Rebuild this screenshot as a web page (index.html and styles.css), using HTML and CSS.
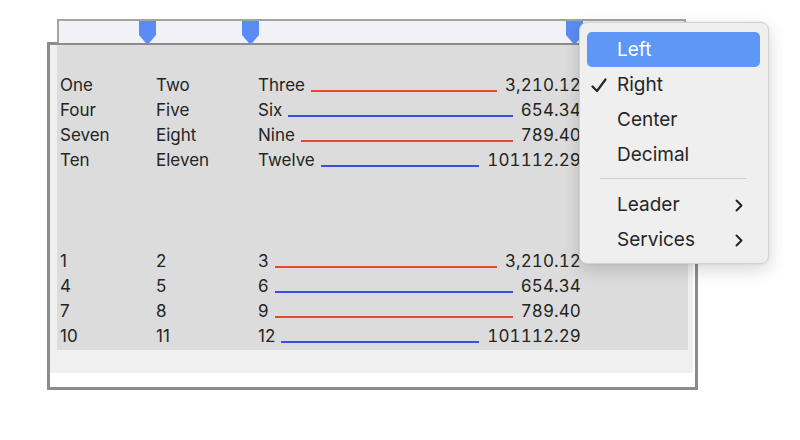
FILE: index.html
```html
<!DOCTYPE html>
<html lang="en">
<head>
  <meta charset="UTF-8" />
  <title>Tab Stops</title>
  <link rel="stylesheet" href="styles.css">
</head>
<body>
  <div class="window">
    <div class="ruler">
      <span class="marker" style="left: 80px"></span>
      <span class="marker" style="left: 183px"></span>
      <span class="marker" style="left: 507px"></span>
    </div>

    <div class="frame">
      <div class="scroll">
        <div class="doc">
          <div class="row"><span>One</span><span>Two</span><span class="tab"><span>Three</span><i class="leader red"></i><span class="num">3,210.12</span></span></div>
          <div class="row"><span>Four</span><span>Five</span><span class="tab"><span>Six</span><i class="leader blue"></i><span class="num">654.34</span></span></div>
          <div class="row"><span>Seven</span><span>Eight</span><span class="tab"><span>Nine</span><i class="leader red"></i><span class="num">789.40</span></span></div>
          <div class="row"><span>Ten</span><span>Eleven</span><span class="tab"><span>Twelve</span><i class="leader blue"></i><span class="num">101112.29</span></span></div>

          <div class="blank"></div>

          <div class="row"><span>1</span><span>2</span><span class="tab"><span>3</span><i class="leader red"></i><span class="num">3,210.12</span></span></div>
          <div class="row"><span>4</span><span>5</span><span class="tab"><span>6</span><i class="leader blue"></i><span class="num">654.34</span></span></div>
          <div class="row"><span>7</span><span>8</span><span class="tab"><span>9</span><i class="leader red"></i><span class="num">789.40</span></span></div>
          <div class="row"><span>10</span><span>11</span><span class="tab"><span>12</span><i class="leader blue"></i><span class="num">101112.29</span></span></div>
        </div>
      </div>
    </div>
  </div>

  <div class="menu">
    <div class="item active">Left</div>
    <div class="item">
      <svg class="check" width="16" height="15" viewBox="0 0 16 15"><path d="M1.5 8.5 L6 13 L14.5 1.5" fill="none" stroke="#262626" stroke-width="2.2" stroke-linecap="round" stroke-linejoin="round"/></svg>
      Right
    </div>
    <div class="item">Center</div>
    <div class="item">Decimal</div>
    <div class="sep"></div>
    <div class="item">Leader
      <svg class="chev" width="8" height="13" viewBox="0 0 8 13"><path d="M1.5 1.5 L6.5 6.5 L1.5 11.5" fill="none" stroke="#262626" stroke-width="2" stroke-linecap="round" stroke-linejoin="round"/></svg>
    </div>
    <div class="item">Services
      <svg class="chev" width="8" height="13" viewBox="0 0 8 13"><path d="M1.5 1.5 L6.5 6.5 L1.5 11.5" fill="none" stroke="#262626" stroke-width="2" stroke-linecap="round" stroke-linejoin="round"/></svg>
    </div>
  </div>
</body>
</html>
```

FILE: styles.css
```css
body {
  margin: 0;
  background: #fff;
  font-family: Inter, "Noto Sans", sans-serif;
  color: #242424;
}

.window {
  padding: 19px 0 0 47px;
}

.ruler {
  position: relative;
  box-sizing: border-box;
  width: 629px;
  height: 24px;
  margin-left: 10px;
  background: #f1f2f8;
  border: 2px solid #a3a3a3;
  border-bottom: none;
}

.marker {
  position: absolute;
  top: 0;
  width: 17px;
  height: 24px;
  background: #5b8cf5;
  clip-path: polygon(0 0, 100% 0, 100% 58%, 50% 100%, 0 58%);
  z-index: 2;
}

.frame {
  box-sizing: border-box;
  width: 651px;
  height: 348px;
  margin-top: -1px;
  border: 3px solid #8c8c8c;
  background: #fff;
}

.scroll {
  height: 328px;
  margin-right: 2px;
  background: #f0f0f0;
}

.doc {
  box-sizing: border-box;
  width: 631px;
  height: 305px;
  margin-left: 7px;
  padding: 28px 0 0 3px;
  background: #dcdcdc;
  font-size: 17px;
  line-height: 25px;
}

.row {
  display: grid;
  grid-template-columns: 96px 102px 323px;
  height: 25px;
}

.tab {
  display: flex;
  align-items: baseline;
}

.leader {
  flex: 1;
  height: 0;
  margin: 0 8px 0 6px;
  border-bottom: 2px solid;
  position: relative;
  top: 1px;
}

.leader.red {
  border-color: #e8472f;
}

.leader.blue {
  border-color: #3b4ce8;
}

.num {
  text-align: right;
  font-variant-numeric: tabular-nums;
  letter-spacing: 0.1px;
}

.blank {
  height: 76px;
}

.menu {
  position: absolute;
  left: 579px;
  top: 22px;
  box-sizing: border-box;
  width: 190px;
  height: 242px;
  padding: 9px 8px 7px 7px;
  background: #efefef;
  border: 1px solid #d2d2d2;
  border-radius: 8px;
  box-shadow: 0 6px 18px rgba(0, 0, 0, 0.16), 0 0 3px rgba(0, 0, 0, 0.08);
  font-size: 19px;
  color: #262626;
  z-index: 5;
}

.item {
  position: relative;
  height: 35px;
  line-height: 35px;
  padding-left: 30px;
  border-radius: 5px;
}

.item.active {
  background: #5e97f6;
  color: #fff;
}

.check {
  position: absolute;
  left: 4px;
  top: 11px;
}

.chev {
  position: absolute;
  right: 17px;
  top: 12px;
}

.sep {
  height: 1px;
  margin: 6px 13px 8px 13px;
  background: #d0d0d0;
}
```
